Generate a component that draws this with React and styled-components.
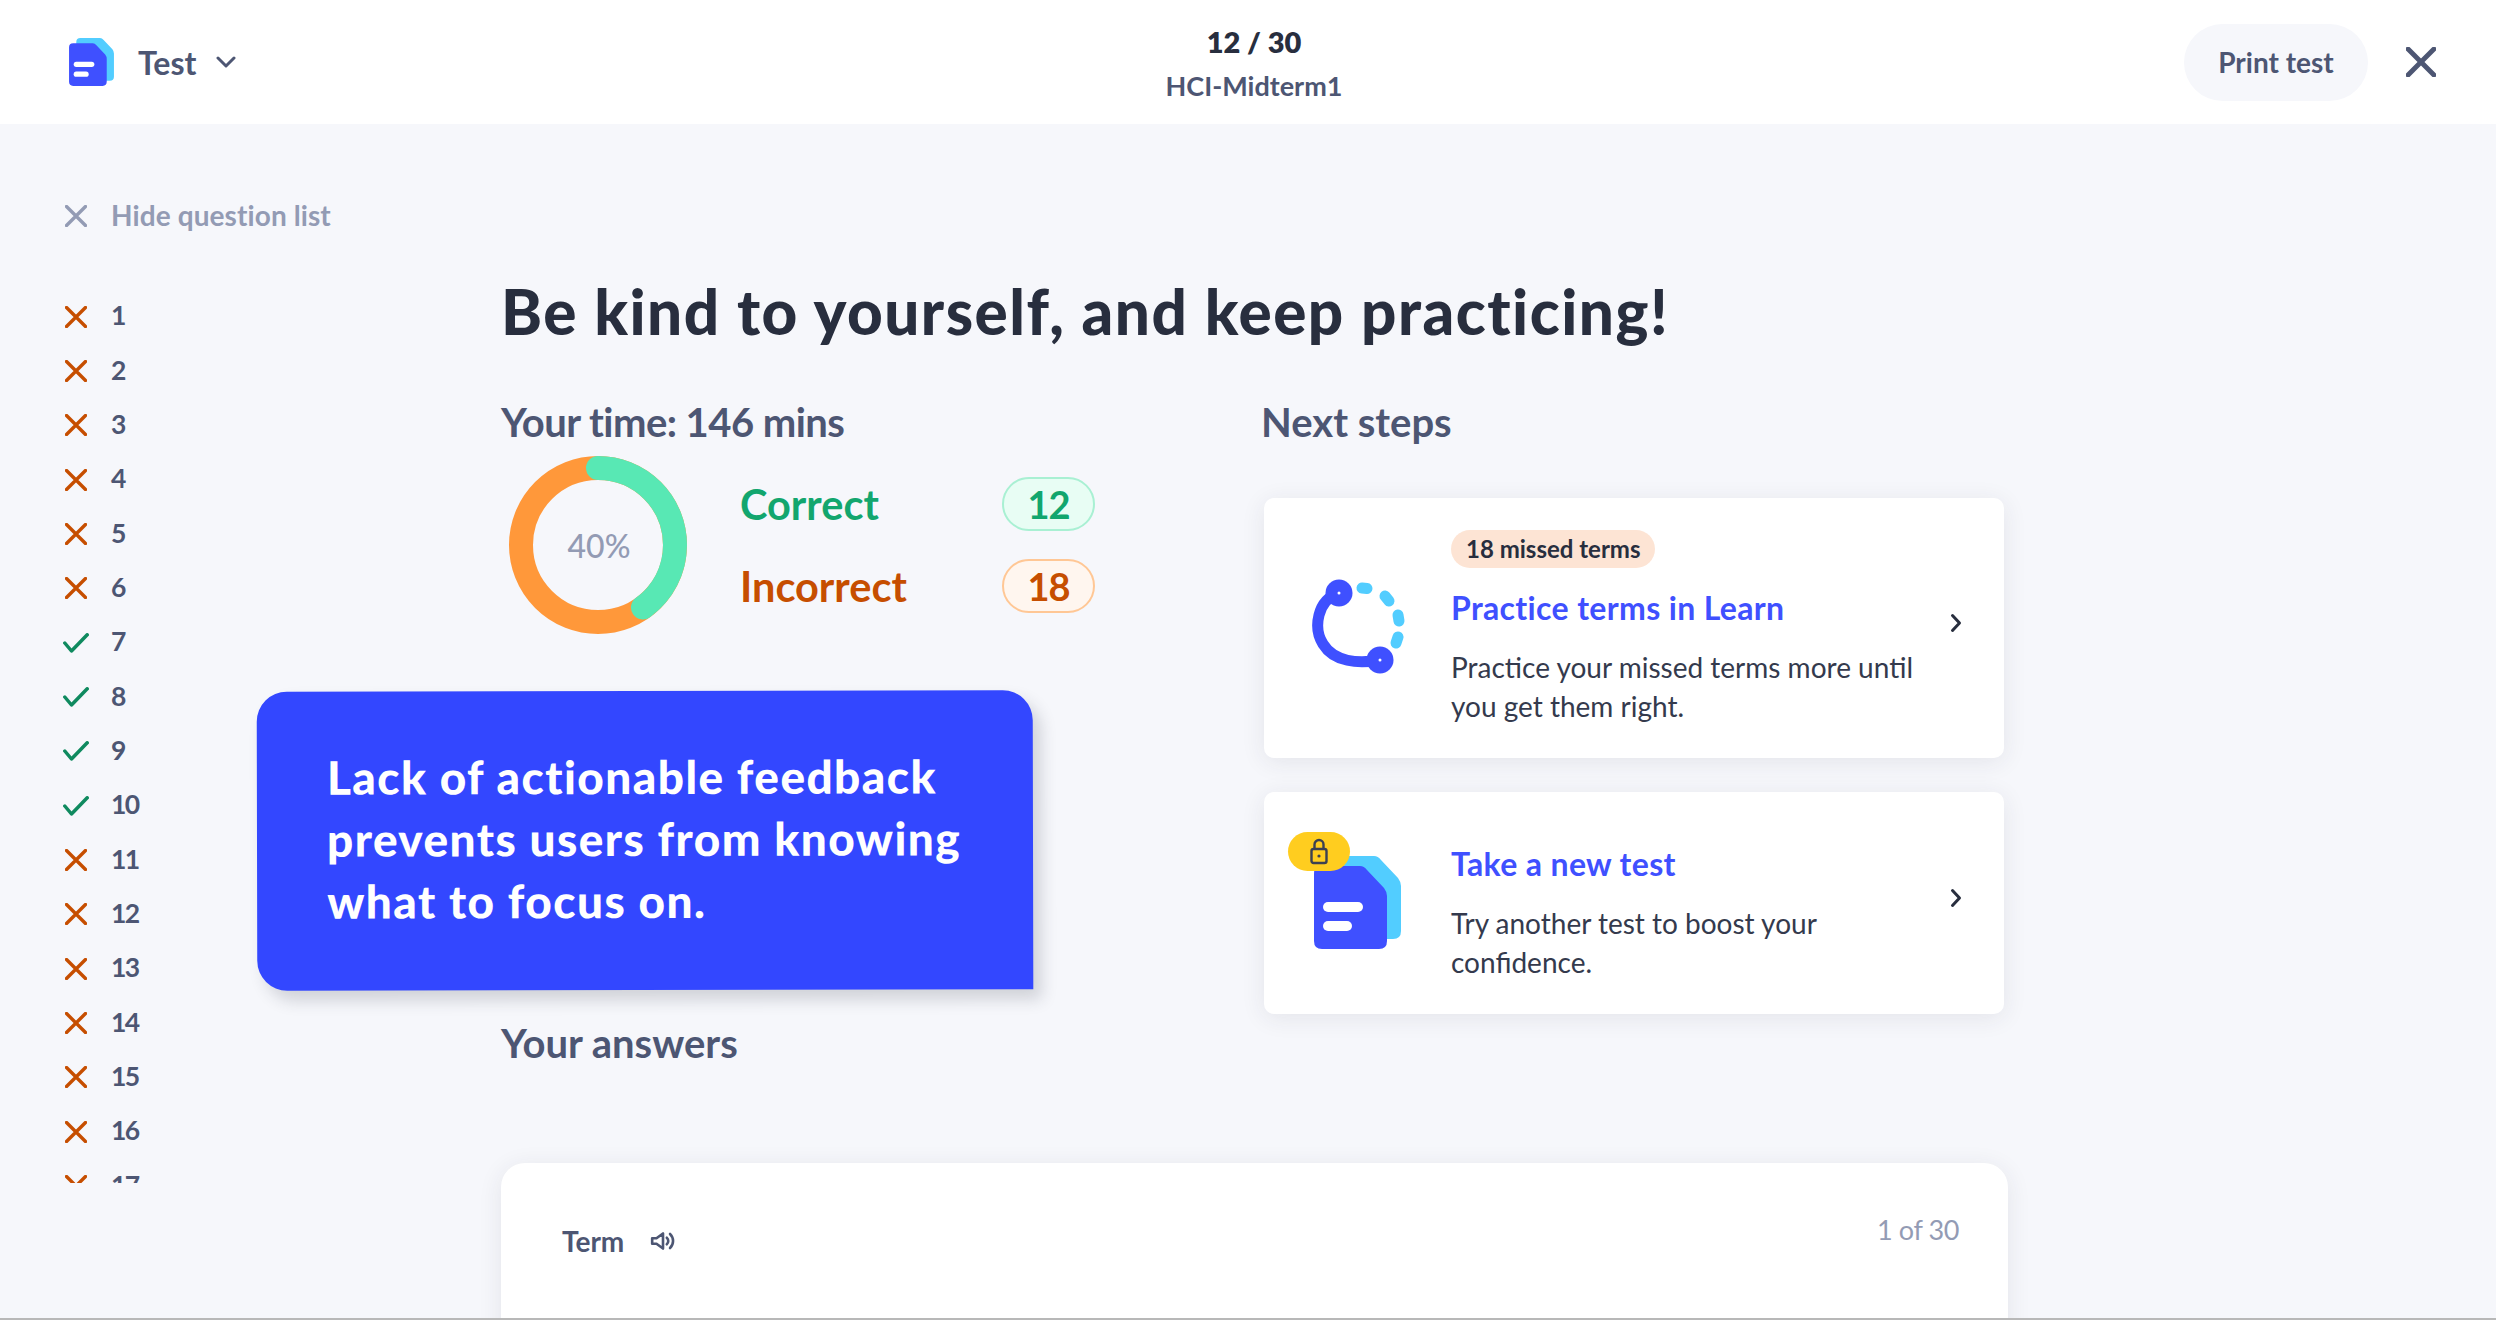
import React from 'react';
import styled, {createGlobalStyle} from 'styled-components';

const font = `Lato, "Open Sans", sans-serif`;

const GlobalStyle = createGlobalStyle`
    html, body {
        margin:0;
        padding:0;
        background:#f6f7fb;
        font-family:${font};
    }
    * { box-sizing:border-box; }
`

const Page = styled.div`
    width:2496px;
    height:1320px;
    display:flex;
    flex-direction:column;
    overflow:hidden;
    border-bottom:2px solid #b8b8b8;
    background:#f6f7fb;
`

const Header = styled.header`
    height:124px;
    flex:none;
    background:white;
    display:grid;
    grid-template-columns:1fr auto 1fr;
    align-items:center;
    padding:0 60px 0 69px;
`

const Brand = styled.div`
    display:flex;
    align-items:center;
`

const BrandName = styled.span`
    font-size:32px;
    font-weight:700;
    color:#4d5673;
    margin:0 20px 0 24px;
`

const Center = styled.div`
    text-align:center;
    margin-left:3px;
    padding-top:5px;
`

const Count = styled.div`
    font-size:29px;
    font-weight:800;
    line-height:38px;
    color:#282e3e;
`

const SetName = styled.div`
    font-size:27px;
    font-weight:700;
    line-height:40px;
    margin-top:5px;
    color:#4d5673;
`

const Actions = styled.div`
    display:flex;
    justify-content:flex-end;
    align-items:center;
    gap:38px;
`

const PrintButton = styled.button`
    width:184px;
    height:77px;
    border:none;
    border-radius:39px;
    background:#f6f7fb;
    font-family:${font};
    font-size:28px;
    font-weight:700;
    color:#4d5673;
`

const Main = styled.main`
    position:relative;
    flex:1;
    display:flex;
    overflow:hidden;
`

const Sidebar = styled.aside`
    width:501px;
    flex:none;
    padding:76px 0 0 63px;
`

const HideRow = styled.div`
    display:flex;
    align-items:center;
    height:30px;
    gap:22px;
    font-size:28px;
    letter-spacing:.1px;
    font-weight:700;
    color:#939bb4;
`

const QuestionList = styled.ul`
    list-style:none;
    margin:58px 0 0;
    padding:0;
    height:895px;
    overflow:hidden;
`

const QuestionRow = styled.li`
    display:flex;
    align-items:center;
    height:54.35px;
    gap:22px;
    font-size:26.5px;
    letter-spacing:-1.6px;
    font-weight:700;
    color:#4d5673;
`

const StatusIcon = styled.span`
    width:26px;
    flex:none;
    display:flex;
    justify-content:center;
    padding-top:${p => p.$drop || 0}px;
`

const Content = styled.section`
    width:1507px;
    flex:none;
    padding-top:152px;
`

const Title = styled.h1`
    margin:0;
    font-size:62px;
    line-height:70px;
    letter-spacing:1.5px;
    font-weight:900;
    color:#282e3e;
`

const Columns = styled.div`
    display:grid;
    grid-template-columns:760px 747px;
    margin-top:53px;
`

const SectionTitle = styled.h2`
    margin:0;
    font-size:40px;
    line-height:46px;
    letter-spacing:${p => p.$tight ? '-.55px' : '0'};
    font-weight:700;
    color:#4d5673;
`

const Score = styled.div`
    display:flex;
    align-items:center;
    gap:53px;
    margin:11px 0 0 8px;
`

const Donut = styled.div`
    position:relative;
    width:178px;
    height:178px;
`

const DonutLabel = styled.span`
    position:absolute;
    inset:0;
    display:flex;
    align-items:center;
    justify-content:center;
    padding-left:2px;
    font-size:32px;
    font-weight:500;
    color:#939bb4;
`

const Stats = styled.div`
    width:355px;
    display:flex;
    flex-direction:column;
    gap:28px;
`

const StatRow = styled.div`
    display:flex;
    align-items:center;
    justify-content:space-between;
    font-size:41.5px;
    font-weight:700;
    color:${p => p.$color};
`

const StatPill = styled.span`
    width:93px;
    height:54px;
    border-radius:27px;
    display:flex;
    align-items:center;
    justify-content:center;
    font-size:38px;
    letter-spacing:-1px;
    background:${p => p.$bg};
    border:2px solid ${p => p.$border};
`

const Cards = styled.div`
    display:flex;
    flex-direction:column;
    gap:34px;
    margin:53px 0 0 3px;
    width:740px;
`

const Card = styled.div`
    display:flex;
    align-items:center;
    padding:32px 0 33px 46px;
    background:white;
    border-radius:10px;
    box-shadow:0 4px 24px rgba(40,46,62,.09);
`

const CardIcon = styled.div`
    width:141px;
    flex:none;
    padding-left:${p => p.$inset || 0}px;
`

const DocWrap = styled.div`
    position:relative;
    width:87px;
    height:93px;
`

const LockBadge = styled.span`
    position:absolute;
    left:-26px;
    top:-24px;
    width:62px;
    height:39px;
    border-radius:20px;
    background:#ffcd1f;
    display:flex;
    align-items:center;
    justify-content:center;
`

const CardText = styled.div`
    width:480px;
    flex:none;
`

const Badge = styled.span`
    display:inline-block;
    height:38px;
    line-height:38px;
    padding:0 15px;
    border-radius:19px;
    background:#fde4d4;
    font-size:24px;
    font-weight:700;
    color:#282e3e;
    vertical-align:top;
`

const CardTitle = styled.div`
    margin-top:20px;
    font-size:32px;
    letter-spacing:.35px;
    line-height:40px;
    font-weight:700;
    color:#3f50ff;
`

const CardDesc = styled.div`
    margin-top:20px;
    font-size:28px;
    line-height:38.5px;
    font-weight:400;
    color:#343a4d;
`

const Chevron = styled.div`
    margin:-10px 0 0 19px;
    display:flex;
`

const Answers = styled(SectionTitle)`
    margin-top:6px;
`

const AnswerCard = styled.div`
    margin-top:97px;
    height:300px;
    padding:36px 49px 0 61px;
    background:white;
    border-radius:24px;
    box-shadow:0 4px 24px rgba(40,46,62,.09);
    display:flex;
    justify-content:space-between;
    align-items:flex-start;
`

const TermLabel = styled.div`
    margin-top:24px;
    display:flex;
    align-items:center;
    gap:26px;
    font-size:28px;
    line-height:36px;
    font-weight:700;
    color:#4d5673;
`

const Progress = styled.div`
    margin-top:13px;
    font-size:27px;
    letter-spacing:-.4px;
    line-height:36px;
    color:#939bb4;
`

const Callout = styled.div`
    position:absolute;
    left:257px;
    top:567px;
    width:776px;
    height:299px;
    padding:55px 0 0 70px;
    background:#3347ff;
    border-radius:30px 30px 0 30px;
    box-shadow:8px 10px 16px rgba(40,46,62,.18);
    transform:rotate(-.12deg);
    font-size:46px;
    letter-spacing:1.4px;
    line-height:62px;
    font-weight:900;
    color:white;
`

const CrossIcon = ({color, size = 22, weight = 3.4}) => (
    <svg width={size} height={size} viewBox="0 0 22 22" fill="none" stroke={color} strokeWidth={weight} strokeLinecap="round">
        <path d="M1.5 1.5 20.5 20.5M20.5 1.5 1.5 20.5"/>
    </svg>
)

const CheckIcon = ({color}) => (
    <svg width="26" height="20" viewBox="0 0 26 20" fill="none" stroke={color} strokeWidth="3.5" strokeLinecap="round" strokeLinejoin="round">
        <path d="M1.8 10 8.5 18 24.2 1.8"/>
    </svg>
)

const SmallChevron = ({dir}) => (
    <svg width={dir === 'down' ? 20 : 12} height={dir === 'down' ? 12 : 20} viewBox={dir === 'down' ? '0 0 20 12' : '0 0 12 20'} fill="none" stroke={dir === 'down' ? '#4d5673' : '#282e3e'} strokeWidth="3" strokeLinecap="round" strokeLinejoin="round">
        <path d={dir === 'down' ? 'M2 2 10 10 18 2' : 'M2.5 2.5 9.5 10 2.5 17.5'}/>
    </svg>
)

const DocIcon = ({width, height}) => (
    <svg width={width} height={height} viewBox="0 0 87 93">
        <path fill="#52cdff" d="M22 0H60Q64 0 67 4L84 22Q87 26 87 30V75Q87 83 79 83H22Q14 83 14 75V8Q14 0 22 0Z"/>
        <path fill="#3f50ff" d="M8 10H46Q50 10 53 14L70 32Q73 36 73 40V85Q73 93 65 93H8Q0 93 0 85V18Q0 10 8 10Z"/>
        <rect x="9" y="46" width="40" height="10" rx="5" fill="white"/>
        <rect x="9" y="65" width="29" height="10" rx="5" fill="white"/>
    </svg>
)

const LearnIcon = () => (
    <svg width="100" height="96" viewBox="0 0 100 96" fill="none" strokeLinecap="round">
        <path d="M29 15C7 22 3 50 13 66C24 84 48 86 70 82" stroke="#3f50ff" strokeWidth="11"/>
        <circle cx="29" cy="15" r="13.5" fill="#3f50ff"/>
        <circle cx="70" cy="82" r="13.5" fill="#3f50ff"/>
        <circle cx="29" cy="15" r="1.5" fill="white"/>
        <circle cx="70" cy="82" r="1.5" fill="white"/>
        <path d="M52 10 57 10.5M75 18 79 23M88 37 89 43M88 59 86 65" stroke="#52cdff" strokeWidth="11"/>
    </svg>
)

const LockIcon = () => (
    <svg width="18" height="27" viewBox="0 0 18 27" fill="none" stroke="#3c4152" strokeWidth="2.4">
        <path d="M4.5 11V6.5a4.5 4.5 0 0 1 9 0V11"/>
        <rect x="1.5" y="11" width="15" height="14" rx="2"/>
        <circle cx="9" cy="18" r="1.6" fill="#3c4152" stroke="none"/>
    </svg>
)

const SpeakerIcon = () => (
    <svg width="26" height="26" viewBox="0 0 24 24" fill="none" stroke="#4d5673" strokeWidth="2.4" strokeLinecap="round" strokeLinejoin="round">
        <path d="M2 9.5H6L12 5V19L6 14.5H2Z"/>
        <path d="M15.5 9A4 4 0 0 1 15.5 15M18.5 5.5A9 9 0 0 1 18.5 18.5"/>
    </svg>
)

const ScoreRing = ({percent}) => {
    const r = 77;
    const length = 2 * Math.PI * r;
    return (
        <svg width="178" height="178" viewBox="0 0 178 178" fill="none" strokeWidth="24">
            <circle cx="89" cy="89" r={r} stroke="#ff983a"/>
            <circle cx="89" cy="89" r={r} stroke="#58e8b4" strokeLinecap="round"
                strokeDasharray={`${length * percent / 100} ${length}`}
                transform="rotate(-90 89 89)"/>
        </svg>
    )
}

const questions = [
    false, false, false, false, false, false, true, true, true, true,
    false, false, false, false, false, false, false,
];

const App = () => {
    return (
        <Page>
            <GlobalStyle/>
            <Header>
                <Brand>
                    <DocIcon width={45} height={48}/>
                    <BrandName>Test</BrandName>
                    <SmallChevron dir="down"/>
                </Brand>
                <Center>
                    <Count>12 / 30</Count>
                    <SetName>HCI-Midterm1</SetName>
                </Center>
                <Actions>
                    <PrintButton>Print test</PrintButton>
                    <CrossIcon color="#4d5673" size={30} weight={3.6}/>
                </Actions>
            </Header>
            <Main>
                <Sidebar>
                    <HideRow>
                        <StatusIcon $drop={2}><CrossIcon color="#939bb4"/></StatusIcon>
                        Hide question list
                    </HideRow>
                    <QuestionList>
                        {questions.map((correct, i) => (
                            <QuestionRow key={i}>
                                <StatusIcon $drop={3}>
                                    {correct ? <CheckIcon color="#0f8a5f"/> : <CrossIcon color="#c64e00"/>}
                                </StatusIcon>
                                {i + 1}
                            </QuestionRow>
                        ))}
                    </QuestionList>
                </Sidebar>
                <Content>
                    <Title>Be kind to yourself, and keep practicing!</Title>
                    <Columns>
                        <div>
                            <SectionTitle $tight>Your time: 146 mins</SectionTitle>
                            <Score>
                                <Donut>
                                    <ScoreRing percent={40}/>
                                    <DonutLabel>40%</DonutLabel>
                                </Donut>
                                <Stats>
                                    <StatRow $color="#12a66e">
                                        Correct
                                        <StatPill $bg="#e8fdf4" $border="#a9f0d3">12</StatPill>
                                    </StatRow>
                                    <StatRow $color="#c64e00">
                                        Incorrect
                                        <StatPill $bg="#fff6ef" $border="#ffc795">18</StatPill>
                                    </StatRow>
                                </Stats>
                            </Score>
                        </div>
                        <div>
                            <SectionTitle>Next steps</SectionTitle>
                            <Cards>
                                <Card>
                                    <CardIcon><LearnIcon/></CardIcon>
                                    <CardText>
                                        <Badge>18 missed terms</Badge>
                                        <CardTitle>Practice terms in Learn</CardTitle>
                                        <CardDesc>Practice your missed terms more until you get them right.</CardDesc>
                                    </CardText>
                                    <Chevron><SmallChevron dir="right"/></Chevron>
                                </Card>
                                <Card>
                                    <CardIcon $inset={4}>
                                        <DocWrap>
                                            <DocIcon width={87} height={93}/>
                                            <LockBadge><LockIcon/></LockBadge>
                                        </DocWrap>
                                    </CardIcon>
                                    <CardText>
                                        <CardTitle>Take a new test</CardTitle>
                                        <CardDesc>Try another test to boost your confidence.</CardDesc>
                                    </CardText>
                                    <Chevron><SmallChevron dir="right"/></Chevron>
                                </Card>
                            </Cards>
                        </div>
                    </Columns>
                    <Answers>Your answers</Answers>
                    <AnswerCard>
                        <TermLabel>Term <SpeakerIcon/></TermLabel>
                        <Progress>1 of 30</Progress>
                    </AnswerCard>
                </Content>
                <Callout>
                    Lack of actionable feedback<br/>
                    prevents users from knowing<br/>
                    what to focus on.
                </Callout>
            </Main>
        </Page>
    )
}

export default App;
